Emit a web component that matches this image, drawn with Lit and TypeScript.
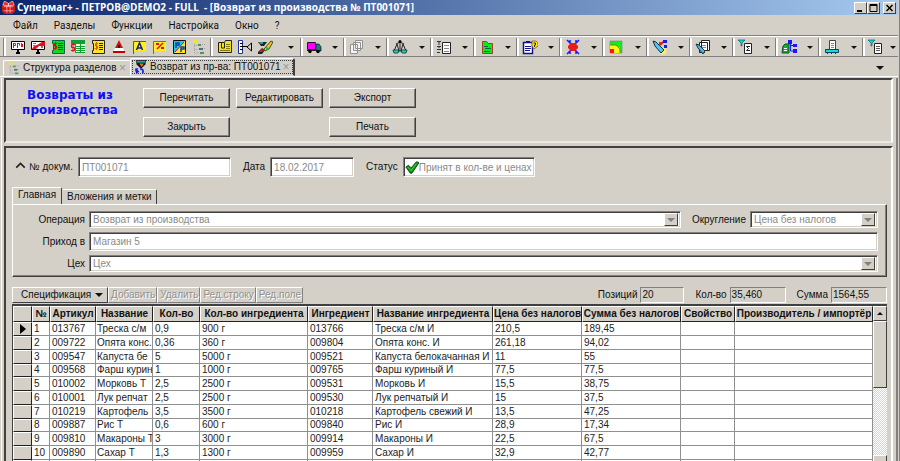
import { LitElement, html, svg, css, nothing } from "lit";
import { customElement, property } from "lit/decorators.js";

const K = "#000";

const icons: Record<string, unknown> = {
  app: svg`<path d="M3 3h10l3 3v7l-3 3H3l-3-3V6z" fill="#d01414"/><path d="M3 0l5 3v3L1 5zM13 0L8 3v3l7-1z" fill="#ff2020" stroke="#fff" stroke-width=".7"/><path d="M2 7h12M2 12h12M6 5v10M10 5v10" stroke="#ffd0d0" stroke-width=".8" fill="none"/>`,
  board: svg`<path d="M1.500 2.500h13v8h-13z" fill="#fff" stroke="${K}"/><path d="M3.500 4v5M3.500 4.500h2v2h-2M7.500 4v5M7.500 4.500h2v2M11.500 4v4M12.500 5v3" stroke="#e01020" fill="none"/><path d="M7 11h2v2H7zM6 13h4v2H6z" fill="${K}"/>`,
  boardcut: svg`<path d="M1.500 2.500h13v8h-13z" fill="#fff" stroke="${K}"/><path d="M2 10L4 7l3-1 5-3h3v4H9l-3 3z" fill="#e01020"/><path d="M3 4h3v1H3zM3 6h2v1H3zM11 7h2v2h-2z" fill="#c06060"/><path d="M7 11h2v2H7zM6 13h4v2H6z" fill="${K}"/>`,
  greendoc: svg`<path d="M4.500 1.500h10v13h-12v-3h1v-7h-1v-3z" fill="#10d820" stroke="#064"/><path d="M8 4.500h5M8 6.500h5M8 8.500h5M8 10.500h5" stroke="#053"/><path d="M7 4.500H4.500v2.500H6.500v2.500H3.500M5.500 3v8" stroke="#d01010" fill="none"/>`,
  greentable: svg`<path d="M1 1h14v13H5V5H1z" fill="#10a030"/><path d="M6 5h4v2H6zM11 5h4v2h-4zM6 8h4v1H6zM11 8h4v1h-4zM6 10h4v1H6zM11 10h4v1h-4zM6 12h4v1H6zM11 12h4v1h-4z" fill="#e8ffe8"/><path d="M5 5.500H1.500v3H4.500v3H1M3 4v9" stroke="#e01010" fill="none"/>`,
  yellowdoc: svg`<path d="M4.500 1.500h10v13h-12v-3h1v-7h-1v-3z" fill="#ffe820" stroke="#222"/><path d="M9 4.500h4M9 6.500h4M9 8.500h4M9 10.500h4" stroke="#222"/><path d="M8 4.500H5.500v2.500H7.500v2.500H4.500M6.500 3v8" stroke="#e06000" fill="none"/>`,
  warn: svg`<path d="M8 1l6 13H2z" fill="#fff"/><path d="M8 1l4 8H4z" fill="#d01010"/><path d="M2 12h12v2H2z" fill="#c00000"/><path d="M7 6h2v3H7z" fill="#222"/><path d="M4 9h8l1 3H3z" fill="#fff"/>`,
  flagA: svg`<path d="M2 2h13v10H2z" fill="#ffef20"/><path d="M2.500 15V2.500H15" stroke="#0a70c0" fill="none"/><path d="M5.500 11l3-7 3 7M6.500 9h4" stroke="#102080" stroke-width="1.500" fill="none"/>`,
  flagP: svg`<path d="M2 2h13v10H2z" fill="#ffef20"/><path d="M2.500 15V2.500H15" stroke="#907000" fill="none"/><path d="M6 10l6-6" stroke="#e01010" stroke-width="1.500"/><path d="M5 4h3v2H5zM10 8h3v2h-3z" fill="#e01010"/>`,
  duo: svg`<path d="M2.500 1.500h12v13h-12z" fill="#20c8f0" stroke="#111"/><path d="M14 2v12H3z" fill="#ffe820"/><path d="M5 9V4h3v2H5M10 13V8h3v2h-3" stroke="#10409a" stroke-width="1.500" fill="none"/><path d="M13 3L4 13" stroke="#e01010"/>`,
  tree: svg`<path d="M2 1h4v3H2z" fill="#f0e040"/><path d="M7 5h3v2H7zM9 13h4v2H9z" fill="#40a050"/><path d="M8 9h4v2H8z" fill="#6060a0"/><path d="M11 5.500h3M13 9.500h2M3.500 5v9h4M3.500 6.500h3M3.500 10.500h4" stroke="#a0a0a0" stroke-dasharray="1 1" fill="none"/>`,
  clipbook: svg`<path d="M1.500 3.500h6l1-2h6v12h-13z" fill="#f0e020" stroke="#222"/><path d="M3 11.500h10M9 5.500h4M9 7.500h4M9 9.500h4" stroke="#887800"/><path d="M4.500 4v5h3V4" stroke="#222" fill="none"/>`,
  ruler: svg`<path d="M1.500 1.500h4v13h-4z" fill="#fff" stroke="#2030a0"/><path d="M3 4.500h3M3 7.500h7M3 10.500h3" stroke="${K}"/><path d="M14.500 4v8L10 8z" fill="#d4d0c8" stroke="${K}"/>`,
  brush: svg`<path d="M1 3h9l-3 4H4zM1 13l4-4 3 2-3 4H1z" fill="#222"/><path d="M2 3h4v2H3z" fill="#18a0a0"/><path d="M2 13l3-3 2 1-2 2z" fill="#e02010"/><path d="M7 10l7-8 2 1-4 7-4 2z" fill="#e8c818" stroke="#222" stroke-width=".8"/><path d="M9 8l3 1-3 3z" fill="#20c030"/>`,
  truck: svg`<path d="M1.500 3.500h8v7h-8z" fill="#f0f" stroke="#404"/><path d="M10 5h3l2 3v4h-5z" fill="#108080" stroke="#111" stroke-width=".7"/><path d="M1 11h14v1H1z" fill="#222"/><circle cx="4" cy="12.500" r="1.700"/><circle cx="12" cy="12.500" r="1.700"/>`,
  pages: svg`<path d="M6.500 1.500h7v8h-7zM4.500 3.500h7v8h-7zM1.500 5.500h7v9h-7z" fill="#f4f4f4" stroke="#909090"/>`,
  scales: svg`<path d="M8 2v11M4 5l4-2 4 2M5 5l-3 7h5zM11 5l-2 7h5z" stroke="#222" fill="none"/><path d="M1 11h6l-1 3H2zM9 11h6l-1 3h-4z" fill="#10d8d8" stroke="#222" stroke-width=".8"/><circle cx="8" cy="2.500" r="1.500"/>`,
  listdoc: svg`<path d="M1 2.500h4M3 2v4M1 7.500h4M3 7v2M1 10.500h4M1 13.500h3" stroke="#333"/><path d="M6.500 3.500h8v11h-8z" fill="#fff" stroke="#222"/><path d="M8 6.500h5M8 9.500h5M8 12.500h5" stroke="#888"/>`,
  greenfolder: svg`<path d="M3.500 2.500h4l2 2h4v10h-10z" fill="#10e820" stroke="#a04020"/><path d="M5 7.500h4M6 9.500h6M5 12.500h6" stroke="#064"/>`,
  clipq: svg`<path d="M1.500 3.500h9v11h-9z" fill="#fff" stroke="#101090" stroke-width="1.500"/><path d="M4 2h4v2H4z" fill="#101090"/><path d="M3 7.500h6M3 9.500h6M3 11.500h5" stroke="#101090"/><path d="M10 2h4l2 2v3l-4 3-2-3z" fill="#ffe820" stroke="#806000" stroke-width=".8"/><path d="M11.500 4h2v2h-1v2" stroke="#222" fill="none"/>`,
  burst: svg`<path d="M2 1l4 4M14 1l-4 4M2 15l4-4M14 15l-4-4M5 1v3M11 1v3M5 15v-3M11 15v-3" stroke="#1818ff" stroke-width="1.500"/><path d="M6 4h4l3 3v2l-3 3H6L3 9V7z" fill="#f01818"/>`,
  zones: svg`<path d="M2 2h12v12H2z" fill="#10f018" stroke="#888" stroke-width=".7"/><path d="M2 6h6l4 3v5H2z" fill="#fff020"/><path d="M2 10h4v4H2z" fill="#f01818"/><path d="M2 6h6l4 4v4" fill="none" stroke="#6a8a10"/>`,
  torch: svg`<circle cx="11" cy="12" r="3.500" fill="#ffec60"/><path d="M1 2l3 1 8 8-3 3-6-7z" fill="#50c8e8" stroke="#103050"/><path d="M8 6l3-3" stroke="#c02020" stroke-width="2"/><path d="M11 1h4v3h-4zM12 6h3v3h-3z" fill="#1818e8"/><path d="M7 3h3v3H7z" fill="#f02020"/>`,
  torchdoc: svg`<path d="M6.500 1.500h8v10h-8zM4.500 3.500h8v10h-8z" fill="#fff" stroke="#222"/><path d="M7 6.500h4M7 8.500h4" stroke="#888"/><path d="M1 5l3 1 6 6-2 3-5-6z" fill="#50b8e0" stroke="#103050"/><path d="M10 12h3v3h-3z" fill="#f0e040"/>`,
  funneldoc: svg`<path d="M6.500 4.500h7v10h-7z" fill="#fff" stroke="#222"/><path d="M12 7.500H8.500L10.500 9.500L8.500 11.500H12" stroke="#222" fill="none"/><path d="M0 1h7L4 4v3H3V4z" fill="#18d0d8" stroke="#066" stroke-width=".7"/>`,
  nettree: svg`<path d="M2 7l2-2h4v9H1z" fill="#10b020" stroke="#053"/><path d="M3 9.500h3M3 11.500h3" stroke="#fff"/><path d="M7 1h4v4H7zM12 5h4v3h-4zM12 10h4v4h-4z" fill="#1818ff"/><path d="M9.500 4v8h3M9 6.500h3" stroke="#1818ff" fill="none"/>`,
  scanner: svg`<path d="M5.500 1.500h6v9h-6z" fill="#fff" stroke="#444"/><path d="M7 4.500h3M7 6.500h3M7 8.500h3" stroke="#888"/><path d="M1.500 10.500h13v3h-13z" fill="#18d8e0" stroke="#045"/><path d="M3 13h1v2H3zM7 13h1v2H7zM11 13h1v2h-1z" fill="#045"/>`,
  funnellist: svg`<path d="M6.500 4.500h7v10h-7z" fill="#fff" stroke="#222"/><path d="M8 7.500h4M8 9.500h4M8 11.500h4" stroke="#555"/><path d="M0 1h7L4 4v3H3V4z" fill="#18d0d8" stroke="#066" stroke-width=".7"/>`,
  returns: svg`<path d="M2 0h12l-1 5-4 4H7L3 5z" fill="#181818"/><path d="M3 1h10v2H3z" fill="#10b0a0"/><path d="M6 4h5l-2 4z" fill="#f07020"/><path d="M1 10l4-1-1 2 2 2-3 3-1-2z" fill="#1020f0"/><path d="M7 10c3 0 4 2 3 5" stroke="#1020f0" stroke-width="2" fill="none"/>`,
  check: svg`<path d="M1 8l3-2 3 3 6-7 3 1-8 12H6z" fill="#109818" stroke="#053a08"/><path d="M3 8l4 4 6-8" fill="none" stroke="#50d850"/>`,
  up: svg`<path d="M4 10l4-4 4 4" fill="none" stroke="#222" stroke-width="1.500"/>`,
};

@customElement("sm-icon")
export class SmIcon extends LitElement {
  @property() name = "";
  @property({ type: Number }) size = 16;
  static styles = css`:host { display: inline-flex; flex: none; } svg { display: block; }`;
  render() {
    return html`<svg width=${this.size} height=${this.size} viewBox="0 0 16 16" aria-hidden="true">${icons[this.name] ?? nothing}</svg>`;
  }
}

const menus = ["Файл", "Разделы", "Функции", "Настройка", "Окно", "?"];
const mainTools = ["board", "boardcut", "greendoc", "greentable", "yellowdoc", "warn", "flagA", "flagP", "duo", "tree"];
const editTools = ["clipbook", "ruler", "brush"];
const dropTools = ["truck", "pages", "scales", "listdoc", "greenfolder", "clipq", "burst", "zones", "torch", "torchdoc", "funneldoc", "nettree", "scanner", "funnellist"];

const headers = ["", "№", "Артикул", "Название", "Кол-во", "Кол-во ингредиента", "Ингредиент", "Название ингредиента", "Цена без налогов", "Сумма без налогов", "Свойство", "Производитель / импортёр"];
const rows: string[][] = [
  ["1", "013767", "Треска с/м", "0,9", "900 г", "013766", "Треска с/м И", "210,5", "189,45"],
  ["2", "009722", "Опята конс.", "0,36", "360 г", "009804", "Опята конс. И", "261,18", "94,02"],
  ["3", "009547", "Капуста бе", "5", "5000 г", "009521", "Капуста белокачанная И", "11", "55"],
  ["4", "009568", "Фарш курин", "1", "1000 г", "009765", "Фарш куриный И", "77,5", "77,5"],
  ["5", "010002", "Морковь Т", "2,5", "2500 г", "009531", "Морковь И", "15,5", "38,75"],
  ["6", "010001", "Лук репчат", "2,5", "2500 г", "009530", "Лук репчатый И", "15", "37,5"],
  ["7", "010219", "Картофель", "3,5", "3500 г", "010218", "Картофель свежий И", "13,5", "47,25"],
  ["8", "009887", "Рис Т", "0,6", "600 г", "009840", "Рис И", "28,9", "17,34"],
  ["9", "009810", "Макароны Т", "3", "3000 г", "009914", "Макароны И", "22,5", "67,5"],
  ["10", "009890", "Сахар Т", "1,3", "1300 г", "009959", "Сахар И", "32,9", "42,77"],
  ["", "", "", "", "", "", "", "", ""],
];

@customElement("app-root")
export class AppRoot extends LitElement {
  static styles = css`
    :host {
      display: flex; flex-direction: column; height: 100vh; overflow: hidden; box-sizing: border-box;
      background: #d4d0c8; color: #111; border-right: 1px solid #808080;
      font: 10px/12px "Liberation Sans", Arial, sans-serif; white-space: nowrap;
    }
    *, *::before { box-sizing: border-box; }
    button, input, select { font: inherit; color: inherit; margin: 0; padding: 0; border-radius: 0; min-width: 0; }
    button { background: none; border: 0; }
    .caption {
      flex: none; display: flex; align-items: center; gap: 2px; height: 15px; padding: 0 2px; margin-right: 1px;
      background: linear-gradient(90deg, #0a246a, #a6caf0);
      color: #fff; font: bold 10px/15px "Open Sans", "Noto Sans", sans-serif;
    }
    .caption h1 { flex: 1; margin: 0; font: inherit; white-space: pre; }
    .win { width: 13px; height: 12px; display: grid; place-items: center; background: #d4d0c8; border: 1px solid; border-color: #fff #404040 #404040 #fff; }
    .caption .win + .win { margin-left: -2px; }
    .caption .win.close { margin-left: 1px; }
    .win svg { display: block; }
    .menu { flex: none; display: flex; gap: 16px; height: 20px; padding: 2px 0 0 13px; font: 10px/12px Roboto, sans-serif; }
    .tools { flex: none; display: flex; height: 22px; border-top: 1px solid #808080; border-bottom: 1px solid #808080; box-shadow: inset 0 1px #fff; margin-right: 1px; padding-left: 4px; }
    .group { display: flex; align-items: center; border-left: 2px solid #fff; box-shadow: -1px 0 #808080; margin-top: 2px; }
    .group.main { width: 207px; padding: 0 4px; justify-content: space-between; }
    .group.edit { width: 90px; padding: 0 4px; gap: 4px; }
    .group.drop { flex: 43 1 0; padding: 0 6px 0 3px; justify-content: space-between; }
    .group.drop:last-child { flex: 38 1 0; padding-right: 2px; }
    .tool { display: grid; place-items: center; }
    .tri { display: block; width: 0; height: 0; border: 3px solid transparent; border-top-color: currentColor; border-bottom: 0; }
    .tri.big { border-width: 4px 4px 0; }
    .tri.rise { border: 3px solid transparent; border-top: 0; border-bottom-color: currentColor; }
    .group.edit .more { margin-left: auto; margin-right: 3px; }
    .docs { flex: none; display: flex; align-items: flex-end; height: 20px; padding: 0 14px 0 3px; margin-right: 1px; border-bottom: 1px solid #fff; font: 10px/12px "Liberation Sans", sans-serif; }
    .doc { display: flex; align-items: center; gap: 2px; height: 16px; padding: 0 4px 0 3px; border: 1px solid; border-color: #fff #808080 transparent #fff; border-radius: 2px 2px 0 0; }
    .doc.plain { border-right: 0; width: 127px; }
    .doc.on { height: 18px; width: 165px; border-color: #fff #404040 transparent #fff; outline: 1px dotted #404040; outline-offset: -3px; border-right-width: 2px; }
    .doc .x { margin-left: auto; color: #999; font-size: 12px; line-height: 12px; }
    .docs .more { margin: 0 0 6px auto; }
    .work { flex: 1; min-height: 0; display: flex; flex-direction: column; gap: 3px; margin: 1px 1px 0 1px; padding: 0 3px 0 2px; border-left: 1px solid #fff; border-right: 2px solid #808080; }
    .panel { border: 2px solid; border-color: #404040 #fff #ece9e2 #404040; }
    .head { flex: none; display: flex; gap: 19px; height: 65px; padding: 8px 10px; }
    .head h2 { margin: 0; width: 108px; text-align: center; white-space: normal; color: #1010f0; font: bold 12px/15px "DejaVu Sans", sans-serif; }
    .cmds { display: grid; grid-template-columns: repeat(3, 87px); grid-auto-rows: 20px; gap: 9px 6px; }
    .cmd { background: #d4d0c8; border: 1px solid; border-color: #fff #404040 #404040 #fff; box-shadow: inset -1px -1px #808080; }
    .cmd.last { grid-column: 3; }
    .body { flex: 1; min-height: 0; display: flex; flex-direction: column; padding: 9px 3px 0 6px; border-bottom: 0; }
    .line { display: flex; align-items: center; }
    .ids label { margin-right: 5px; }
    .field { display: flex; align-items: center; background: #fff; border: 1px solid; border-color: #808080 #fff #fff #808080; box-shadow: inset 1px 1px #404040, inset -1px -1px #d4d0c8; height: 20px; padding: 2px; }
    .field input, .field select { flex: 1; width: 0; height: 100%; border: 0; background: none; appearance: none; outline: 0; opacity: 1; color: #8a8a8a; -webkit-text-fill-color: #8a8a8a; padding-left: 1px; }
    .num { width: 153px; margin-right: 12px; }
    .date { width: 84px; margin-right: 12px; }
    .state { width: 132px; }
    .field.state { padding: 2px 1px; }
    .state input { padding-left: 0; }
    .drop-btn { width: 14px; height: 100%; display: grid; place-items: center; background: #d4d0c8; border: 1px solid; border-color: #fff #404040 #404040 #fff; color: #808080; }
    .pages { display: flex; align-items: flex-end; margin-top: 10px; height: 17px; }
    .page { height: 15px; padding: 0 4px; border: 1px solid; border-color: #fff #404040 transparent transparent; border-bottom: 0; border-radius: 2px 2px 0 0; }
    .page.on { height: 17px; padding: 0 5px 2px; border-left-color: #fff; background: #d4d0c8; }
    .sheet { display: grid; gap: 4px; margin-right: 1px; padding: 6px 8px 4px 2px; border: 1px solid; border-color: #fff #404040 #404040 #fff; box-shadow: inset -1px -1px #808080; }
    .sheet label { width: 70px; text-align: right; margin-right: 4px; flex: none; }
    .sheet .field { flex: 1; height: 17px; padding: 1px 2px; }
    .sheet .field.text { height: 19px; }
    .sheet label.round { width: 65px; }
    .sheet .field.rounding { flex: none; width: 128px; }
    .spec { display: flex; align-items: stretch; height: 16px; margin-top: 10px; padding-right: 1px; }
    .spec-btn { display: flex; align-items: center; justify-content: space-between; width: 96px; padding: 0 4px 0 8px; border: 1px solid; border-color: #fff #404040 #404040 #fff; }
    .act { padding: 0 1px 0 2px; border: 1px solid; border-color: #fff #808080 #808080 #fff; color: #909090; text-shadow: 1px 1px #fff; }
    .totals { margin-left: auto; display: flex; gap: 11px; }
    .totals label { display: flex; align-items: center; gap: 3px; }
    .totals output { height: 16px; width: 56px; padding: 1px 0 0 1px; border: 1px solid; border-color: #808080 #fff #fff #808080; }
    .totals .short { width: 44px; }
    .grid { flex: 1; min-height: 0; display: flex; overflow: hidden; margin-top: 1px; margin-right: 1px; border: 1px solid #404040; border-top-width: 2px; border-bottom: 0; border-right: 0; }
    .rows { flex: 1; min-width: 0; overflow: hidden; background: #fff; }
    table { width: 100%; table-layout: fixed; border-collapse: separate; border-spacing: 0; }
    th { height: 16px; padding: 0; font-weight: bold; line-height: 14px; background: #d4d0c8; border: 1px solid; border-color: #fff #222 #222 #fff; overflow: hidden; text-align: center; }
    td { height: 14px; padding: 0 0 0 2px; line-height: 12px; border-right: 1px solid #909090; border-bottom: 1px solid #909090; overflow: hidden; color: #222; }
    td:nth-child(4) { padding-left: 1px; }
    tr:nth-child(4n) td { height: 13px; }
    td.sel { background: #d4d0c8; border: 1px solid; border-color: #fff #222 #222 #fff; padding: 0 0 0 6px; line-height: 11px; }
    .now { display: block; width: 0; border: 5px solid transparent; border-left: 6px solid #000; border-right: 0; }
    .c0 { width: 19px; } .c1 { width: 18px; } .c2 { width: 46px; } .c3 { width: 57px; } .c4 { width: 47px; } .c5 { width: 108px; }
    .c6 { width: 65px; } .c7 { width: 120px; } .c8 { width: 89px; } .c9 { width: 99px; } .c10 { width: 54px; }
    .bar { flex: none; width: 14px; display: flex; flex-direction: column; background: repeating-conic-gradient(#fff 0 25%, #d8d4cc 0 50%) 0 0 / 2px 2px; }
    .bar .end, .thumb { background: #d4d0c8; border: 1px solid; border-color: #fff #404040 #404040 #fff; }
    .bar .end { height: 15px; display: grid; place-items: center; flex: none; }
    .thumb { height: 67px; margin-bottom: auto; }
    .bar .cut { margin-bottom: -9px; }
  `;

  private tool(name: string, label = name) {
    return html`<button class="tool" aria-label=${label}><sm-icon name=${name}></sm-icon></button>`;
  }

  private more(cls = "") {
    return html`<button class="more" aria-label="Ещё"><span class="tri ${cls}"></span></button>`;
  }

  private combo(id: string, value: string, cls = "") {
    return html`<div class="field ${cls}"><select id=${id} disabled><option>${value}</option></select><span class="drop-btn"><span class="tri big"></span></span></div>`;
  }

  render() {
    return html`
      <header class="caption">
        <sm-icon name="app" size="13"></sm-icon>
        <h1>Супермаг+ - ПЕТРОВ@DEMO2 - FULL  - [Возврат из производства № ПТ001071]</h1>
        <button class="win" aria-label="Свернуть"><svg width="9" height="8"><path d="M1 7h5" stroke="#000" stroke-width="2"/></svg></button>
        <button class="win" aria-label="Развернуть"><svg width="9" height="8"><path d="M1 .5h7v7H1zM1 1.500h7" fill="none" stroke="#000"/></svg></button>
        <button class="win close" aria-label="Закрыть окно"><svg width="9" height="8"><path d="M1.500 1l6 6M7.500 1l-6 6" stroke="#000" stroke-width="1.500"/></svg></button>
      </header>
      <nav class="menu">${menus.map((m) => html`<button>${m}</button>`)}</nav>
      <div class="tools">
        <div class="group main">${mainTools.map((t) => this.tool(t))}</div>
        <div class="group edit">${editTools.map((t) => this.tool(t))}${this.more()}</div>
        ${dropTools.map((t) => html`<div class="group drop">${this.tool(t)}${this.more()}</div>`)}
      </div>
      <div class="docs">
        <button class="doc plain"><sm-icon name="tree" size="14"></sm-icon>Структура разделов<span class="x">×</span></button>
        <button class="doc on"><sm-icon name="returns" size="14"></sm-icon>Возврат из пр-ва: ПТ001071<span class="x">×</span></button>
        ${this.more("big")}
      </div>
      <main class="work">
        <section class="panel head">
          <h2>Возвраты из производства</h2>
          <div class="cmds">
            <button class="cmd">Перечитать</button><button class="cmd">Редактировать</button><button class="cmd">Экспорт</button>
            <button class="cmd">Закрыть</button><button class="cmd last">Печать</button>
          </div>
        </section>
        <section class="panel body">
          <div class="line ids">
            <button aria-label="Скрыть поля"><sm-icon name="up" size="17"></sm-icon></button>
            <label for="num">№ докум.</label>
            <div class="field num"><input id="num" disabled .value=${"ПТ001071"} /></div>
            <label for="date">Дата</label>
            <div class="field date"><input id="date" disabled .value=${"18.02.2017"} /></div>
            <label for="state">Статус</label>
            <div class="field state"><sm-icon name="check" size="14"></sm-icon><input id="state" disabled .value=${"Принят в кол-ве и ценах"} /></div>
          </div>
          <div class="pages"><button class="page on">Главная</button><button class="page">Вложения и метки</button></div>
          <div class="sheet">
            <div class="line"><label for="op">Операция</label>${this.combo("op", "Возврат из производства")}
              <label class="round" for="rnd">Округление</label>${this.combo("rnd", "Цена без налогов", "rounding")}</div>
            <div class="line"><label for="to">Приход в</label><div class="field text"><input id="to" disabled .value=${"Магазин 5"} /></div></div>
            <div class="line"><label for="shop">Цех</label>${this.combo("shop", "Цех")}</div>
          </div>
          <div class="spec">
            <button class="spec-btn">Спецификация<span class="tri big"></span></button>
            ${["Добавить", "Удалить", "Ред.строку", "Ред.поле"].map((a) => html`<button class="act" disabled>${a}</button>`)}
            <div class="totals">
              <label>Позиций<output class="short">20</output></label>
              <label>Кол-во<output>35,460</output></label>
              <label>Сумма<output>1564,55</output></label>
            </div>
          </div>
          <div class="grid">
            <div class="rows">
              <table>
                <thead><tr>${headers.map((h, i) => html`<th class="c${i}">${h}</th>`)}</tr></thead>
                <tbody>
                  ${rows.map((r, i) => html`<tr><td class="sel">${i === 0 ? html`<span class="now"></span>` : nothing}</td>${r.map((c) => html`<td>${c}</td>`)}<td></td><td></td></tr>`)}
                </tbody>
              </table>
            </div>
            <div class="bar">
              <span class="end"><span class="tri rise"></span></span>
              <span class="thumb"></span>
              <span class="end cut"><span class="tri"></span></span>
            </div>
          </div>
        </section>
      </main>
    `;
  }
}
